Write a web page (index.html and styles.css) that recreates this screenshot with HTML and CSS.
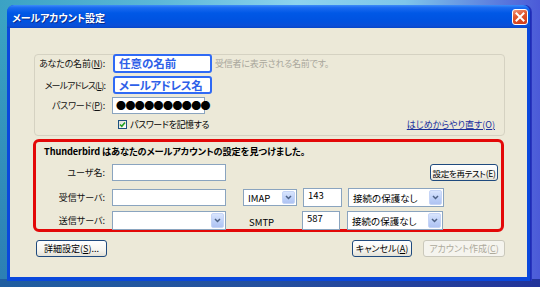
FILE: index.html
```html
<!DOCTYPE html>
<html lang="ja">
<head>
<meta charset="utf-8">
<link rel="stylesheet" href="styles.css">
</head>
<body>
<div class="desktop">
  <div class="window">
    <div class="titlebar">
      <span class="title">メールアカウント設定</span>
      <span class="close"><svg width="10" height="10" viewBox="0 0 10 10"><path d="M1.5 1.5 L8.5 8.5 M8.5 1.5 L1.5 8.5" stroke="#fff" stroke-width="2" stroke-linecap="square"/></svg></span>
    </div>
    <div class="client">
      <div class="group">
        <div class="row r1">
          <span class="lbl">あなたの名前(<u>N</u>):</span>
          <span class="hl hl1">任意の名前</span>
          <span class="hint">受信者に表示される名前です。</span>
        </div>
        <div class="row r2">
          <span class="lbl tight">メールアドレス(<u>L</u>):</span>
          <span class="hl hl2">メールアドレス名</span>
        </div>
        <div class="row r3">
          <span class="lbl">パスワード(<u>P</u>):</span>
          <span class="field pw">●●●●●●●●●●</span>
        </div>
        <div class="row r4">
          <span class="check"><svg width="7" height="7" viewBox="0 0 7 7"><path d="M1 3.5 L2.8 5.3 L6 1.5" stroke="#21A121" stroke-width="1.6" fill="none"/></svg></span>
          <span class="checklbl">パスワードを記憶する</span>
          <span class="link">はじめからやり直す(O)</span>
        </div>
      </div>
      <div class="redbox">
        <div class="heading">Thunderbird はあなたのメールアカウントの設定を見つけました。</div>
        <div class="row u1">
          <span class="lbl2">ユーザ名:</span>
          <span class="field f-user"></span>
          <span class="btn retest">設定を再テスト(E)</span>
        </div>
        <div class="row u2">
          <span class="lbl2">受信サーバ:</span>
          <span class="field f-user"></span>
          <span class="select s-imap"><span class="stext">IMAP</span><span class="arrow"><svg width="7" height="5" viewBox="0 0 7 5"><path d="M1 1 L3.5 3.5 L6 1" stroke="#4D6185" stroke-width="1.5" fill="none"/></svg></span></span>
          <span class="field f-port">143</span>
          <span class="select s-sec"><span class="stext">接続の保護なし</span><span class="arrow"><svg width="7" height="5" viewBox="0 0 7 5"><path d="M1 1 L3.5 3.5 L6 1" stroke="#4D6185" stroke-width="1.5" fill="none"/></svg></span></span>
        </div>
        <div class="row u3">
          <span class="lbl2">送信サーバ:</span>
          <span class="select s-out"><span class="stext"></span><span class="arrow"><svg width="7" height="5" viewBox="0 0 7 5"><path d="M1 1 L3.5 3.5 L6 1" stroke="#4D6185" stroke-width="1.5" fill="none"/></svg></span></span>
          <span class="smtp">SMTP</span>
          <span class="field f-port2">587</span>
          <span class="select s-sec2"><span class="stext">接続の保護なし</span><span class="arrow"><svg width="7" height="5" viewBox="0 0 7 5"><path d="M1 1 L3.5 3.5 L6 1" stroke="#4D6185" stroke-width="1.5" fill="none"/></svg></span></span>
        </div>
      </div>
      <div class="buttons">
        <span class="btn adv">詳細設定(<u>S</u>)...</span>
        <span class="spacer"></span>
        <span class="btn cancel">キャンセル(<u>A</u>)</span>
        <span class="btn create">アカウント作成(<u>C</u>)</span>
      </div>
    </div>
  </div>
</div>
</body>
</html>
```

FILE: styles.css
```css
* { box-sizing: border-box; }
html, body { margin: 0; padding: 0; }
body {
  width: 540px;
  height: 287px;
  overflow: hidden;
  font-family: "Noto Sans CJK JP", "Noto Sans", sans-serif;
  font-feature-settings: "palt";
  font-size: 9px;
  color: #000;
}
.desktop {
  width: 540px;
  height: 287px;
  padding: 5px 10px 0 7px;
  background:
    linear-gradient(90deg, #3BA2C4 0%, #5DB8D8 30%, #8DD3EE 55%, #7FC6EA 75%, #4B5AD8 100%);
  position: relative;
}
.desktop::after {
  content: "";
  position: absolute;
  left: 0; right: 0; bottom: 0; height: 8px;
  background: linear-gradient(90deg, #1F5EA0 0%, #244F9E 50%, #22339A 100%);
}
.desktop::before {
  content: "";
  position: absolute;
  top: 20px; bottom: 8px; left: 0; width: 7px;
  background: linear-gradient(180deg, #3AA3C2, #2C7FB4);
}
.window {
  position: relative;
  z-index: 1;
  width: 523px;
  height: 276px;
  border-radius: 7px 7px 0 0;
  background: #0A48DC;
  display: flex;
  flex-direction: column;
  padding: 0 3px 4px 3px;
  box-shadow: 1px 0 0 #1B2DB5, 2px 0 0 #2A36C0;
}
.titlebar {
  height: 23px;
  margin: 0 -3px;
  border-radius: 7px 7px 0 0;
  background: linear-gradient(180deg, #3D8CF7 0%, #1A6AF0 12%, #0058E6 35%, #0052E0 70%, #0A4FD8 90%, #0846C8 100%);
  display: flex;
  align-items: center;
  padding: 0 2px 0 5px;
}
.title {
  color: #fff;
  font-weight: bold;
  font-size: 10px;
  letter-spacing: -0.1px;
  text-shadow: 1px 1px 0 #0A2A8A;
  flex: 1;
  padding-top: 1px;
}
.close {
  width: 16px;
  height: 16px;
  border: 1px solid #fff;
  border-radius: 3px;
  background: linear-gradient(160deg, #F09880 0%, #E2582E 40%, #CF3A18 100%);
  display: flex;
  align-items: center;
  justify-content: center;
  margin-top: 1px;
}
.client {
  flex: 1;
  background: #ECE9D8;
  padding: 26px 22px 0 24px;
}
.group {
  height: 82px;
  border: 1px solid #D5D2C2;
  border-radius: 4px;
  padding: 0;
}
.row {
  display: flex;
  align-items: center;
}
.lbl {
  width: 71px;
  text-align: right;
  padding-right: 1px;
  color: #111;
  font-size: 9px;
  letter-spacing: -0.2px;
  white-space: nowrap;
}
.lbl.tight { letter-spacing: -0.9px; }
.hl {
  margin-left: 7px;
  border: 2px solid #2F6AF5;
  border-radius: 3px;
  background: #fff;
  color: #2E5FE8;
  font-weight: bold;
  font-size: 11.5px;
  line-height: 14px;
  width: 99px;
  padding-left: 4px;
  white-space: nowrap;
  overflow: hidden;
}
.r1 { height: 19px; margin-top: -1px; }
.hl1 { height: 19px; }
.hint { margin-left: 3px; color: #A9A79C; font-size: 9px; letter-spacing: -0.2px; }
.r2 { height: 18px; margin-top: 3px; }
.hl2 { height: 18px; letter-spacing: -0.4px; }
.r3 { height: 18px; margin-top: 2px; }
.field {
  display: inline-block;
  background: #fff;
  border: 1px solid #8AA4BF;
  height: 17px;
}
.pw {
  margin-left: 6px;
  width: 93px;
  font-size: 10px;
  line-height: 15px;
  letter-spacing: -0.6px;
  padding-left: 3px;
  white-space: nowrap;
}
.r4 { height: 10px; margin-top: 5px; }
.check {
  margin-left: 83px;
  width: 9px;
  height: 9px;
  border: 1px solid #1C5180;
  background: linear-gradient(135deg, #DCDCD6, #fff);
  display: flex;
  align-items: center;
  justify-content: center;
}
.checklbl { margin-left: 3px; font-size: 9px; letter-spacing: -0.4px; }
.link {
  margin-left: auto;
  margin-right: 9px;
  color: #1A2F9C;
  text-decoration: underline;
  font-size: 9px;
}
.redbox {
  margin-top: 3px;
  width: 471px;
  margin-left: -1px;
  height: 93px;
  border: 3px solid #E30808;
  border-radius: 6px;
}
.heading {
  font-weight: bold;
  font-size: 9.2px;
  padding-left: 8px;
  margin-top: 2px;
  height: 14px;
  line-height: 14px;
  white-space: nowrap;
  letter-spacing: -0.1px;
}
.lbl2 {
  width: 69px;
  text-align: right;
  font-size: 9px;
  color: #111;
}
.u1 { height: 17px; margin-top: 6px; }
.f-user { margin-left: 7px; width: 114px; height: 17px; }
.btn {
  display: inline-flex;
  align-items: center;
  justify-content: center;
  height: 17px;
  border: 1px solid #1F4A7E;
  border-radius: 3px;
  background: linear-gradient(180deg, #FFFFFF 0%, #F6F5F0 60%, #E3E1D6 100%);
  font-size: 9px;
  white-space: nowrap;
}
.retest { margin-left: auto; margin-right: 3px; width: 68px; font-size: 8.5px; letter-spacing: -0.3px; }
.u2 { height: 19px; margin-top: 7px; }
.u2 .f-user { height: 17px; }
.select {
  display: inline-flex;
  align-items: center;
  background: #fff;
  border: 1px solid #8AA4BF;
  height: 19px;
  padding: 1px;
}
.stext { flex: 1; padding-left: 3px; font-size: 9.5px; white-space: nowrap; }
.arrow {
  width: 13px;
  height: 15px;
  border-radius: 2px;
  background: linear-gradient(180deg, #D9E5FD 0%, #BCCFF8 60%, #AFC3F2 100%);
  border: 1px solid #C5D4F6;
  display: flex;
  align-items: center;
  justify-content: center;
}
.s-imap { margin-left: 17px; width: 54px; height: 17px; }
.s-imap .arrow { height: 13px; }
.f-port { margin-left: 6px; width: 39px; height: 19px; font-size: 9.5px; padding-left: 4px; line-height: 12px; }
.s-sec { margin-left: 6px; width: 96px; }
.u3 { height: 19px; margin-top: 4px; }
.s-out { margin-left: 7px; width: 114px; }
.smtp { margin-left: 23px; width: 53px; font-size: 9.5px; padding-top: 2px; }
.f-port2 { width: 38px; height: 19px; font-size: 9.5px; padding-left: 4px; line-height: 12px; }
.s-sec2 { margin-left: 7px; width: 96px; }
.buttons {
  display: flex;
  margin-top: 8px;
  height: 17px;
}
.adv { margin-left: 2px; width: 71px; }
.spacer { flex: 1; }
.cancel { width: 60px; }
.create {
  margin-left: 11px;
  margin-right: 0;
  width: 82px;
  border-color: #CAC8BB;
  color: #ADAA9C;
  background: #F5F4EE;
}
u { text-decoration: underline; }
```
